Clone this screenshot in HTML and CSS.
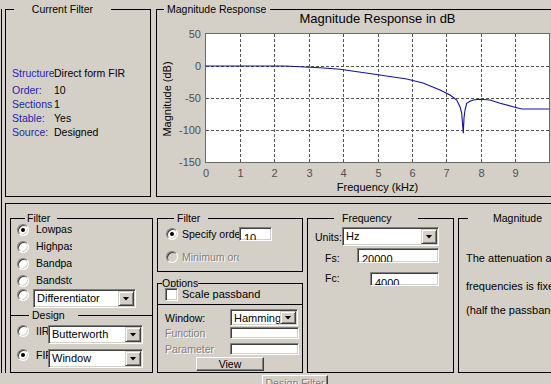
FILE: index.html
```html
<!DOCTYPE html>
<html>
<head>
<meta charset="utf-8">
<title>Filter Design</title>
<link rel="stylesheet" href="styles.css">
</head>
<body>
<div class="app">
  <div class="top">
    <div class="frame cur">
      <div class="ttl t-cur">Current Filter</div>
      <div class="info">
        <div class="irow"><span class="ilab">Structure</span><span>Direct form FIR</span></div>
        <div class="irow r2"><span class="ilab">Order:</span><span>10</span></div>
        <div class="irow"><span class="ilab">Sections</span><span>1</span></div>
        <div class="irow"><span class="ilab">Stable:</span><span>Yes</span></div>
        <div class="irow"><span class="ilab">Source:</span><span>Designed</span></div>
      </div>
    </div>
    <div class="frame resp">
      <div class="ttl t-resp">Magnitude Response</div>
      <svg class="plot" width="394" height="186" viewBox="157 10 394 186" xmlns="http://www.w3.org/2000/svg">
        <text x="377.5" y="23" class="ptitle" text-anchor="middle">Magnitude Response in dB</text>
        <rect x="205.5" y="33.5" width="344" height="129" fill="#fff" stroke="#6a6a6a"/>
        <g class="grid">
          <line x1="240.5" y1="34" x2="240.5" y2="162"/>
          <line x1="274.5" y1="34" x2="274.5" y2="162"/>
          <line x1="309.5" y1="34" x2="309.5" y2="162"/>
          <line x1="343.5" y1="34" x2="343.5" y2="162"/>
          <line x1="378.5" y1="34" x2="378.5" y2="162"/>
          <line x1="412.5" y1="34" x2="412.5" y2="162"/>
          <line x1="446.5" y1="34" x2="446.5" y2="162"/>
          <line x1="481.5" y1="34" x2="481.5" y2="162"/>
          <line x1="515.5" y1="34" x2="515.5" y2="162"/>
          <line x1="206" y1="66.5" x2="549" y2="66.5"/>
          <line x1="206" y1="98.5" x2="549" y2="98.5"/>
          <line x1="206" y1="130.5" x2="549" y2="130.5"/>
        </g>
        <path class="curve" d="M205.5,66 L285,66 L300,66.8 L320,67.8 L340,69.3 L373,74 L406.7,79 L423,83 L440,90 L450,95 L456.7,100 L460,106.7 L461.7,113 L463.3,133.3 L464,118 L465,110 L466.7,103.3 L470,101.3 L473.3,100 L480,99.3 L490,100 L500,103.3 L513,106.7 L521.7,109 L549.5,109"/>
        <g class="yt" text-anchor="end">
          <text x="201" y="38">50</text>
          <text x="201" y="70">0</text>
          <text x="201" y="102">-50</text>
          <text x="201" y="134">-100</text>
          <text x="201" y="166">-150</text>
        </g>
        <g class="xt" text-anchor="middle">
          <text x="206" y="177">0</text>
          <text x="240.5" y="177">1</text>
          <text x="274.5" y="177">2</text>
          <text x="309.5" y="177">3</text>
          <text x="343.5" y="177">4</text>
          <text x="378.5" y="177">5</text>
          <text x="412.5" y="177">6</text>
          <text x="446.5" y="177">7</text>
          <text x="481.5" y="177">8</text>
          <text x="515.5" y="177">9</text>
        </g>
        <text class="alab" x="377.5" y="191" text-anchor="middle">Frequency (kHz)</text>
        <text class="alab" x="0" y="0" text-anchor="middle" transform="translate(170.5 99) rotate(-90)">Magnitude (dB)</text>
      </svg>
    </div>
  </div>

  <div class="bottom">
    <div class="frame c1">
      <div class="ttl t-ftype">Filter</div>
      <div class="ftype">
        <div class="rrow"><span class="radio on"></span><span class="rlab">Lowpass</span></div>
        <div class="rrow"><span class="radio"></span><span class="rlab">Highpass</span></div>
        <div class="rrow"><span class="radio"></span><span class="rlab">Bandpass</span></div>
        <div class="rrow"><span class="radio"></span><span class="rlab">Bandstop</span></div>
        <div class="rrow rrow5"><span class="radio"></span>
          <div class="popup p-diff"><span class="ptxt">Differentiator</span><span class="parr"></span></div>
        </div>
      </div>
      <div class="design">
        <div class="ttl t-design">Design</div>
        <div class="drow d-iir"><span class="radio"></span><span class="dlab">IIR</span>
          <div class="popup p-dm"><span class="ptxt">Butterworth</span><span class="parr"></span></div>
        </div>
        <div class="drow d-fir"><span class="radio on"></span><span class="dlab">FIR</span>
          <div class="popup p-dm"><span class="ptxt">Window</span><span class="parr"></span></div>
        </div>
      </div>
    </div>

    <div class="c2">
      <div class="frame order">
        <div class="ttl t-order">Filter</div>
        <div class="orow orow1"><span class="radio on"></span><span class="olab">Specify order:</span><span class="edit e-ord">10</span></div>
        <div class="orow orow2"><span class="radio dis"></span><span class="olab dtxt">Minimum order</span></div>
      </div>
      <div class="frame opts">
        <div class="ttl t-opts">Options</div>
        <div class="chkrow"><span class="check"></span><span class="clab">Scale passband</span></div>
        <div class="odiv">
          <div class="wrow"><span class="wlab">Window:</span>
            <div class="popup p-win"><span class="ptxt">Hamming</span><span class="parr"></span></div>
          </div>
          <div class="frow"><span class="wlab dtxt">Function</span><span class="edit dedit"></span></div>
          <div class="frow prow"><span class="wlab dtxt">Parameter</span><span class="edit dedit"></span></div>
          <div class="vrow"><button class="btn vbtn">View</button></div>
        </div>
      </div>
    </div>

    <div class="frame freq">
      <div class="ttl t-freq">Frequency</div>
      <div class="urow"><span class="ulab">Units:</span>
        <div class="popup p-units"><span class="ptxt">Hz</span><span class="parr"></span></div>
      </div>
      <div class="fsrow"><span class="flab fs-lab">Fs:</span><span class="edit e-fs">20000</span></div>
      <div class="fsrow fcrow"><span class="flab fc-lab">Fc:</span><span class="edit e-fc">4000</span></div>
    </div>

    <div class="frame magspec">
      <div class="ttl t-mag">Magnitude</div>
      <div class="mtext">
        <p class="m1">The attenuation at cutoff</p>
        <p class="m2">frequencies is fixed at 6 dB</p>
        <p class="m3">(half the passband gain)</p>
      </div>
    </div>
  </div>
</div>
<div class="foot"><button class="btn dfbtn dtxt">Design Filter</button></div>
</body>
</html>
```

FILE: styles.css
```css
* { box-sizing: border-box; }
html, body { margin: 0; padding: 0; }
body {
  width: 551px;
  height: 384px;
  overflow: hidden;
  background: #d4d0c8;
  font-family: "Liberation Sans", Arial, sans-serif;
  font-size: 10.5px;
  color: #000;
}
p { margin: 0; }

.app {
  margin: 9px 0 0 1px;
  border-left: 1px solid #000;
  padding-left: 3px;
  width: 560px;
}
.top { display: flex; height: 188px; }
.frame { border: 1px solid #000; flex: none; }
.ttl {
  height: 13px;
  line-height: 13px;
  margin-top: -7px;
  margin-bottom: -6px;
  background: #d4d0c8;
  white-space: nowrap;
  overflow: hidden;
}

/* current filter */
.cur { width: 146px; height: 188px; padding-left: 6px; }
.t-cur { margin-left: 2px; width: 97px; text-align: center; }
.info { padding-top: 56px; }
.irow { display: flex; height: 14px; line-height: 14px; white-space: nowrap; }
.r2 { margin-top: 3px; }
.ilab { width: 42px; flex: none; overflow: hidden; color: #2424b0; }

/* magnitude response */
.resp { margin-left: 5px; width: 420px; height: 188px; }
.t-resp { margin-left: 7px; width: 106px; padding-left: 3px; }
.plot { display: block; font-family: "Liberation Sans", Arial, sans-serif; }
.ptitle { font-size: 13px; fill: #000; }
.grid line { stroke: #555; stroke-dasharray: 3 2; stroke-width: 1; }
.curve { fill: none; stroke: #12129a; stroke-width: 1.1; }
.yt text, .xt text { font-size: 11px; fill: #505050; }
.alab { font-size: 11px; fill: #000; }

/* bottom */
.bottom {
  margin-top: 6px;
  border-top: 1px solid #000;
  border-left: 1px solid #000;
  padding: 14px 0 0 4px;
  display: flex;
  height: 170px;
}
.c1 { width: 143px; height: 155px; }
.t-ftype { margin-left: 14px; width: 32px; padding-left: 2px; }
.ftype { padding-top: 2px; }
.rrow { display: flex; align-items: center; height: 17px; padding-left: 6px; }
.rlab { margin-left: 7px; width: 36px; overflow: hidden; white-space: nowrap; line-height: 17px; }
.rrow5 { height: 20px; align-items: flex-start; }
.p-diff { margin-left: 4px; width: 103px; height: 19px; }

.design { margin-top: 6px; border-top: 1px solid #000; }
.t-design { margin-left: 18px; width: 49px; padding-left: 3px; }
.drow { display: flex; align-items: flex-start; height: 19px; padding-left: 6px; }
.d-iir { margin-top: 9px; }
.d-fir { margin-top: 5px; }
.dlab { margin-left: 7px; width: 12px; overflow: hidden; white-space: nowrap; line-height: 12px; }
.p-dm { width: 95px; height: 19px; }

.c2 { width: 146px; margin-left: 4px; flex: none; display: flex; flex-direction: column; }
.order { height: 54px; }
.t-order { margin-left: 16px; width: 34px; padding-left: 3px; }
.orow { display: flex; align-items: center; height: 14px; padding-left: 8px; }
.orow1 { margin-top: 8px; }
.orow2 { margin-top: 9px; }
.olab { margin-left: 4px; width: 57px; overflow: hidden; white-space: nowrap; line-height: 14px; }
.e-ord { width: 33px; height: 14px; padding-left: 5px; }

.opts { margin-top: 11px; height: 90px; }
.t-opts { margin-left: 4px; width: 36px; height: 10px; margin-bottom: -3px; }
.chkrow { display: flex; align-items: center; margin-top: 4px; height: 13px; padding-left: 7px; }
.clab { margin-left: 4px; line-height: 13px; white-space: nowrap; font-size: 11px; }
.odiv { margin-top: 3px; border-top: 1px solid #000; }
.wrow { display: flex; align-items: center; margin-top: 4px; height: 17px; padding-left: 7px; }
.wlab { width: 65px; flex: none; white-space: nowrap; line-height: 12px; }
.p-win { width: 68px; height: 17px; }
.frow { display: flex; align-items: center; margin-top: 1px; height: 12px; padding-left: 7px; }
.prow { margin-top: 4px; }
.dedit { width: 69px; height: 12px; background: #d4d0c8; }
.vrow { margin-top: 2px; padding-left: 38px; }
.vbtn { width: 68px; height: 14px; line-height: 11px; font-size: 11px; }

.freq { width: 147px; height: 155px; margin-left: 4px; }
.t-freq { margin-left: 26px; width: 84px; padding-left: 8px; }
.urow { display: flex; align-items: center; margin-top: 8px; height: 19px; padding-left: 7px; }
.ulab { width: 27px; flex: none; overflow: hidden; white-space: nowrap; }
.p-units { width: 97px; height: 19px; }
.fsrow { display: flex; align-items: flex-start; margin-top: 2px; height: 15px; padding-left: 17px; }
.fcrow { margin-top: 9px; height: 14px; }
.flab { line-height: 12px; flex: none; }
.fs-lab { width: 32px; margin-top: 4px; }
.fc-lab { width: 45px; }
.e-fs { width: 82px; height: 15px; }
.e-fc { width: 69px; height: 14px; }

.magspec { width: 130px; height: 155px; margin-left: 4px; }
.t-mag { margin-left: 9px; width: 120px; padding-left: 25px; }
.mtext { padding: 32px 0 0 7px; white-space: nowrap; line-height: 14px; font-size: 11px; }
.m2 { margin-top: 14px; }
.m3 { margin-top: 10px; }

/* widgets */
.radio {
  width: 12px; height: 12px; flex: none;
  border-radius: 50%;
  background: #fff;
  border: 1px solid;
  border-color: #808080 #fff #fff #808080;
  box-shadow: inset 1px 1px 0 #404040, inset -1px -1px 0 #d4d0c8;
  position: relative;
}
.radio.on::after {
  content: "";
  position: absolute;
  left: 3px; top: 3px;
  width: 4px; height: 4px;
  border-radius: 50%;
  background: #000;
}
.radio.dis { background: #d4d0c8; }
.check {
  width: 13px; height: 13px; flex: none;
  background: #fff;
  border: 1px solid;
  border-color: #808080 #fff #fff #808080;
  box-shadow: inset 1px 1px 0 #404040, inset -1px -1px 0 #d4d0c8;
}
.popup {
  display: flex;
  flex: none;
  background: #fff;
  border: 1px solid;
  border-color: #808080 #fff #fff #808080;
  box-shadow: inset 1px 1px 0 #404040, inset -1px -1px 0 #d4d0c8;
  padding: 1px;
}
.ptxt { flex: 1; padding-left: 2px; overflow: hidden; white-space: nowrap; line-height: 15px; font-size: 11px; }
.parr {
  width: 16px; flex: none;
  background: #d4d0c8;
  border: 1px solid;
  border-color: #d4d0c8 #404040 #404040 #d4d0c8;
  box-shadow: inset 1px 1px 0 #fff, inset -1px -1px 0 #808080;
  display: flex; align-items: center; justify-content: center;
}
.parr::after {
  content: "";
  width: 7px; height: 4px;
  background: #000;
  clip-path: polygon(0 0, 100% 0, 50% 100%);
}
.edit {
  flex: none;
  display: block;
  background: #fff;
  border: 1px solid;
  border-color: #808080 #fff #fff #808080;
  box-shadow: inset 1px 1px 0 #404040, inset -1px -1px 0 #d4d0c8;
  padding: 3px 0 0 4px;
  line-height: 14px;
  font-size: 11px;
  overflow: hidden;
  white-space: nowrap;
}
.btn {
  display: block;
  background: #d4d0c8;
  border: 1px solid;
  border-color: #fff #404040 #404040 #fff;
  box-shadow: inset -1px -1px 0 #808080;
  font: inherit;
  color: #000;
  text-align: center;
  padding: 0;
}
.dtxt { color: #808080; text-shadow: 1px 1px 0 #fff; }
.foot { margin-top: 2px; padding-left: 262px; }
.dfbtn { width: 66px; height: 16px; line-height: 12px; }
```
